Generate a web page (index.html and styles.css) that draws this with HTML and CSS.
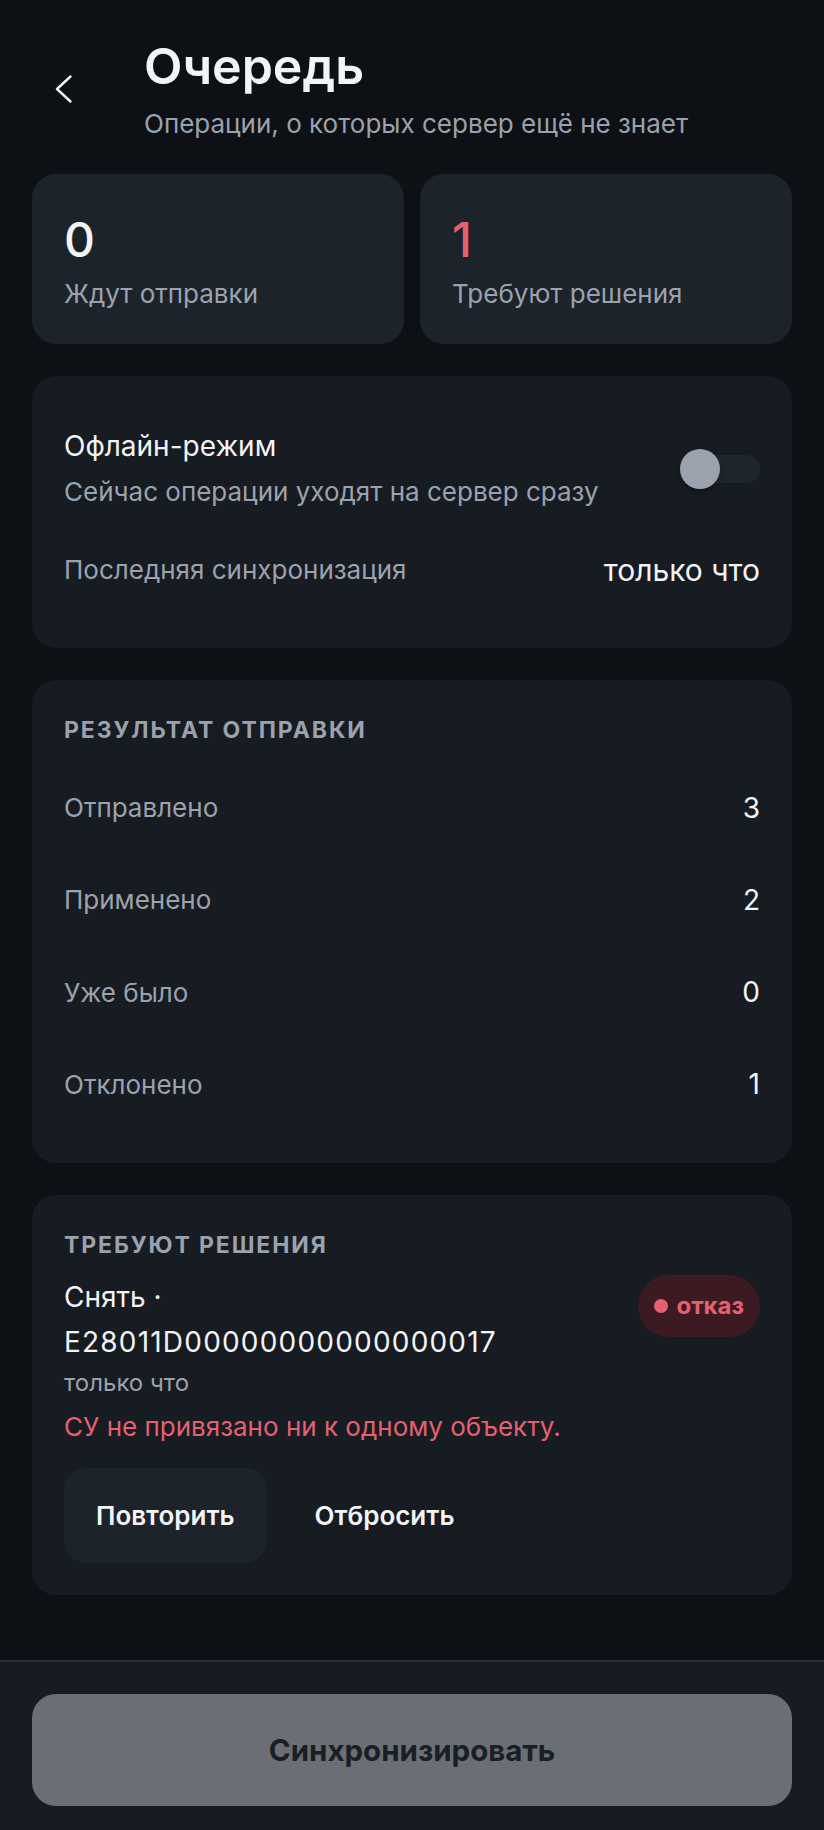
FILE: index.html
```html
<!DOCTYPE html>
<html lang="ru">

<head>
    <meta charset="UTF-8">
    <meta name="viewport" content="width=device-width, initial-scale=1.0">
    <title>Очередь</title>
    <link rel="stylesheet" href="styles.css">
</head>

<body>

    <main class="screen">
        <header class="topbar">
            <button class="back-btn" type="button" aria-label="Назад">
                <svg width="32" height="32" viewBox="0 0 32 32" fill="none">
                    <path d="M22.5 3.5 L9 16 L22.5 28.5" stroke="#f3f4f6" stroke-width="2.4" stroke-linecap="round" stroke-linejoin="round"/>
                </svg>
            </button>
            <div class="topbar-text">
                <h1>Очередь</h1>
                <p class="subtitle">Операции, о которых сервер ещё не знает</p>
            </div>
        </header>

        <section class="stats">
            <div class="stat">
                <div class="stat-num">0</div>
                <div class="stat-label">Ждут отправки</div>
            </div>
            <div class="stat">
                <div class="stat-num danger">1</div>
                <div class="stat-label">Требуют решения</div>
            </div>
        </section>

        <section class="card">
            <div class="toggle-row">
                <div>
                    <div class="row-title">Офлайн-режим</div>
                    <div class="row-hint">Сейчас операции уходят на сервер сразу</div>
                </div>
                <span class="switch"><span class="switch-thumb"></span></span>
            </div>
            <div class="info-row">
                <span class="muted">Последняя синхронизация</span>
                <span class="value strong">только что</span>
            </div>
        </section>

        <section class="card">
            <h3 class="section-title">Результат отправки</h3>
            <div class="result-row"><span class="muted">Отправлено</span><span class="value">3</span></div>
            <div class="result-row"><span class="muted">Применено</span><span class="value">2</span></div>
            <div class="result-row"><span class="muted">Уже было</span><span class="value">0</span></div>
            <div class="result-row"><span class="muted">Отклонено</span><span class="value">1</span></div>
        </section>

        <section class="card">
            <h3 class="section-title">Требуют решения</h3>
            <div class="issue">
                <div class="issue-head">
                    <div class="issue-name">Снять · <span class="issue-id">E28011D00000000000000017</span></div>
                    <span class="badge"><span class="badge-dot"></span>отказ</span>
                </div>
                <div class="issue-time">только что</div>
                <div class="issue-error">СУ не привязано ни к одному объекту.</div>
                <div class="issue-actions">
                    <button class="btn btn-filled" type="button">Повторить</button>
                    <button class="btn btn-text" type="button">Отбросить</button>
                </div>
            </div>
        </section>
    </main>

    <footer class="bottom-bar">
        <button class="sync-btn" type="button">Синхронизировать</button>
    </footer>

</body>

</html>
```

FILE: styles.css
```css
* {
    box-sizing: border-box;
}

body {
    font-family: Inter, "Noto Sans", sans-serif;
    background-color: #0d1116;
    color: #f3f4f6;
    margin: 0;
    min-height: 100vh;
    display: flex;
    flex-direction: column;
}

.screen {
    display: flex;
    flex-direction: column;
    gap: 32px;
    padding: 36px 32px 0;
}

/* header */
.topbar {
    display: flex;
    align-items: center;
    gap: 48px;
}

.back-btn {
    width: 64px;
    height: 64px;
    display: flex;
    align-items: center;
    justify-content: center;
    background: none;
    border: none;
    padding: 0;
    cursor: pointer;
}

h1 {
    margin: 0;
    font-size: 50px;
    line-height: 1.2;
    font-weight: 600;
    color: #f3f4f6;
}

.subtitle {
    margin: 10px 0 0;
    font-size: 26px;
    line-height: 1.4;
    color: #9ca2ad;
}

/* counters */
.stats {
    display: grid;
    grid-template-columns: 1fr 1fr;
    gap: 16px;
}

.stat {
    background-color: #1d232b;
    border-radius: 24px;
    padding: 32px;
}

.stat-num {
    font-size: 48px;
    line-height: 1.4;
    font-weight: 500;
}

.stat-num.danger {
    color: #e5616f;
}

.stat-label {
    margin-top: 2px;
    font-size: 26px;
    line-height: 1.4;
    color: #9ca2ad;
}

/* cards */
.card {
    background-color: #171b22;
    border-radius: 24px;
    padding: 32px;
}

.toggle-row {
    display: flex;
    align-items: center;
    justify-content: space-between;
    padding: 19px 0 20px;
}

.row-title {
    font-size: 28px;
    line-height: 1.4;
}

.row-hint {
    margin-top: 8px;
    font-size: 26px;
    line-height: 1.4;
    color: #9ca2ad;
}

.switch {
    position: relative;
    width: 80px;
    height: 40px;
    flex-shrink: 0;
}

.switch::before {
    content: "";
    position: absolute;
    left: 8px;
    right: 0;
    top: 6px;
    height: 28px;
    border-radius: 14px;
    background-color: #1f252d;
}

.switch-thumb {
    position: absolute;
    left: 0;
    top: 0;
    width: 40px;
    height: 40px;
    border-radius: 50%;
    background-color: #9ca2ad;
    box-shadow: 0 2px 4px rgba(0, 0, 0, 0.35);
}

.info-row,
.result-row {
    display: flex;
    align-items: center;
    justify-content: space-between;
}

.info-row {
    padding: 20px 0 26px;
}

.result-row {
    padding: 26.5px 0;
}

.muted {
    font-size: 26px;
    line-height: 1.4;
    color: #9ca2ad;
}

.value {
    font-size: 28px;
    line-height: 1.4;
    color: #f3f4f6;
}

.value.strong {
    font-size: 30px;
    line-height: 1.3;
}

.section-title {
    margin: 0 0 14px;
    font-size: 23px;
    line-height: 1.6;
    font-weight: 700;
    letter-spacing: 1.9px;
    text-transform: uppercase;
    color: #9ca2ad;
}

/* pending item */
.issue {
    margin-top: -3px;
}

.issue-head {
    display: flex;
    align-items: flex-start;
    justify-content: space-between;
    gap: 16px;
}

.issue-name {
    max-width: 480px;
    font-size: 28px;
    line-height: 1.6;
}

.issue-id {
    letter-spacing: 1.2px;
}

.badge {
    display: inline-flex;
    align-items: center;
    gap: 8px;
    flex-shrink: 0;
    padding: 14px 16px;
    border-radius: 31px;
    background-color: #3b1a22;
    color: #e5616f;
    font-size: 24px;
    line-height: 34px;
    font-weight: 700;
}

.badge-dot {
    width: 14px;
    height: 14px;
    border-radius: 50%;
    background-color: #e5616f;
}

.issue-time {
    margin-top: 2px;
    font-size: 24px;
    line-height: 1.4;
    color: #9ca2ad;
}

.issue-error {
    margin-top: 9px;
    font-size: 26px;
    line-height: 1.4;
    color: #e5616f;
}

.issue-actions {
    display: flex;
    gap: 16px;
    margin-top: 23px;
}

.btn {
    font-family: inherit;
    font-size: 26px;
    line-height: 1.5;
    font-weight: 600;
    color: #f3f4f6;
    border: none;
    border-radius: 22px;
    padding: 28px 32px;
    cursor: pointer;
}

.btn-filled {
    background-color: #1d232b;
}

.btn-text {
    background: none;
}

/* bottom bar */
.bottom-bar {
    margin-top: auto;
    background-color: #171b22;
    border-top: 2px solid #2a2f37;
    padding: 32px 32px 24px;
}

.sync-btn {
    display: block;
    width: 100%;
    height: 112px;
    border: none;
    border-radius: 24px;
    background-color: #6b6e75;
    color: #1a1e25;
    font-family: inherit;
    font-size: 29.5px;
    font-weight: 700;
    cursor: pointer;
}
```
